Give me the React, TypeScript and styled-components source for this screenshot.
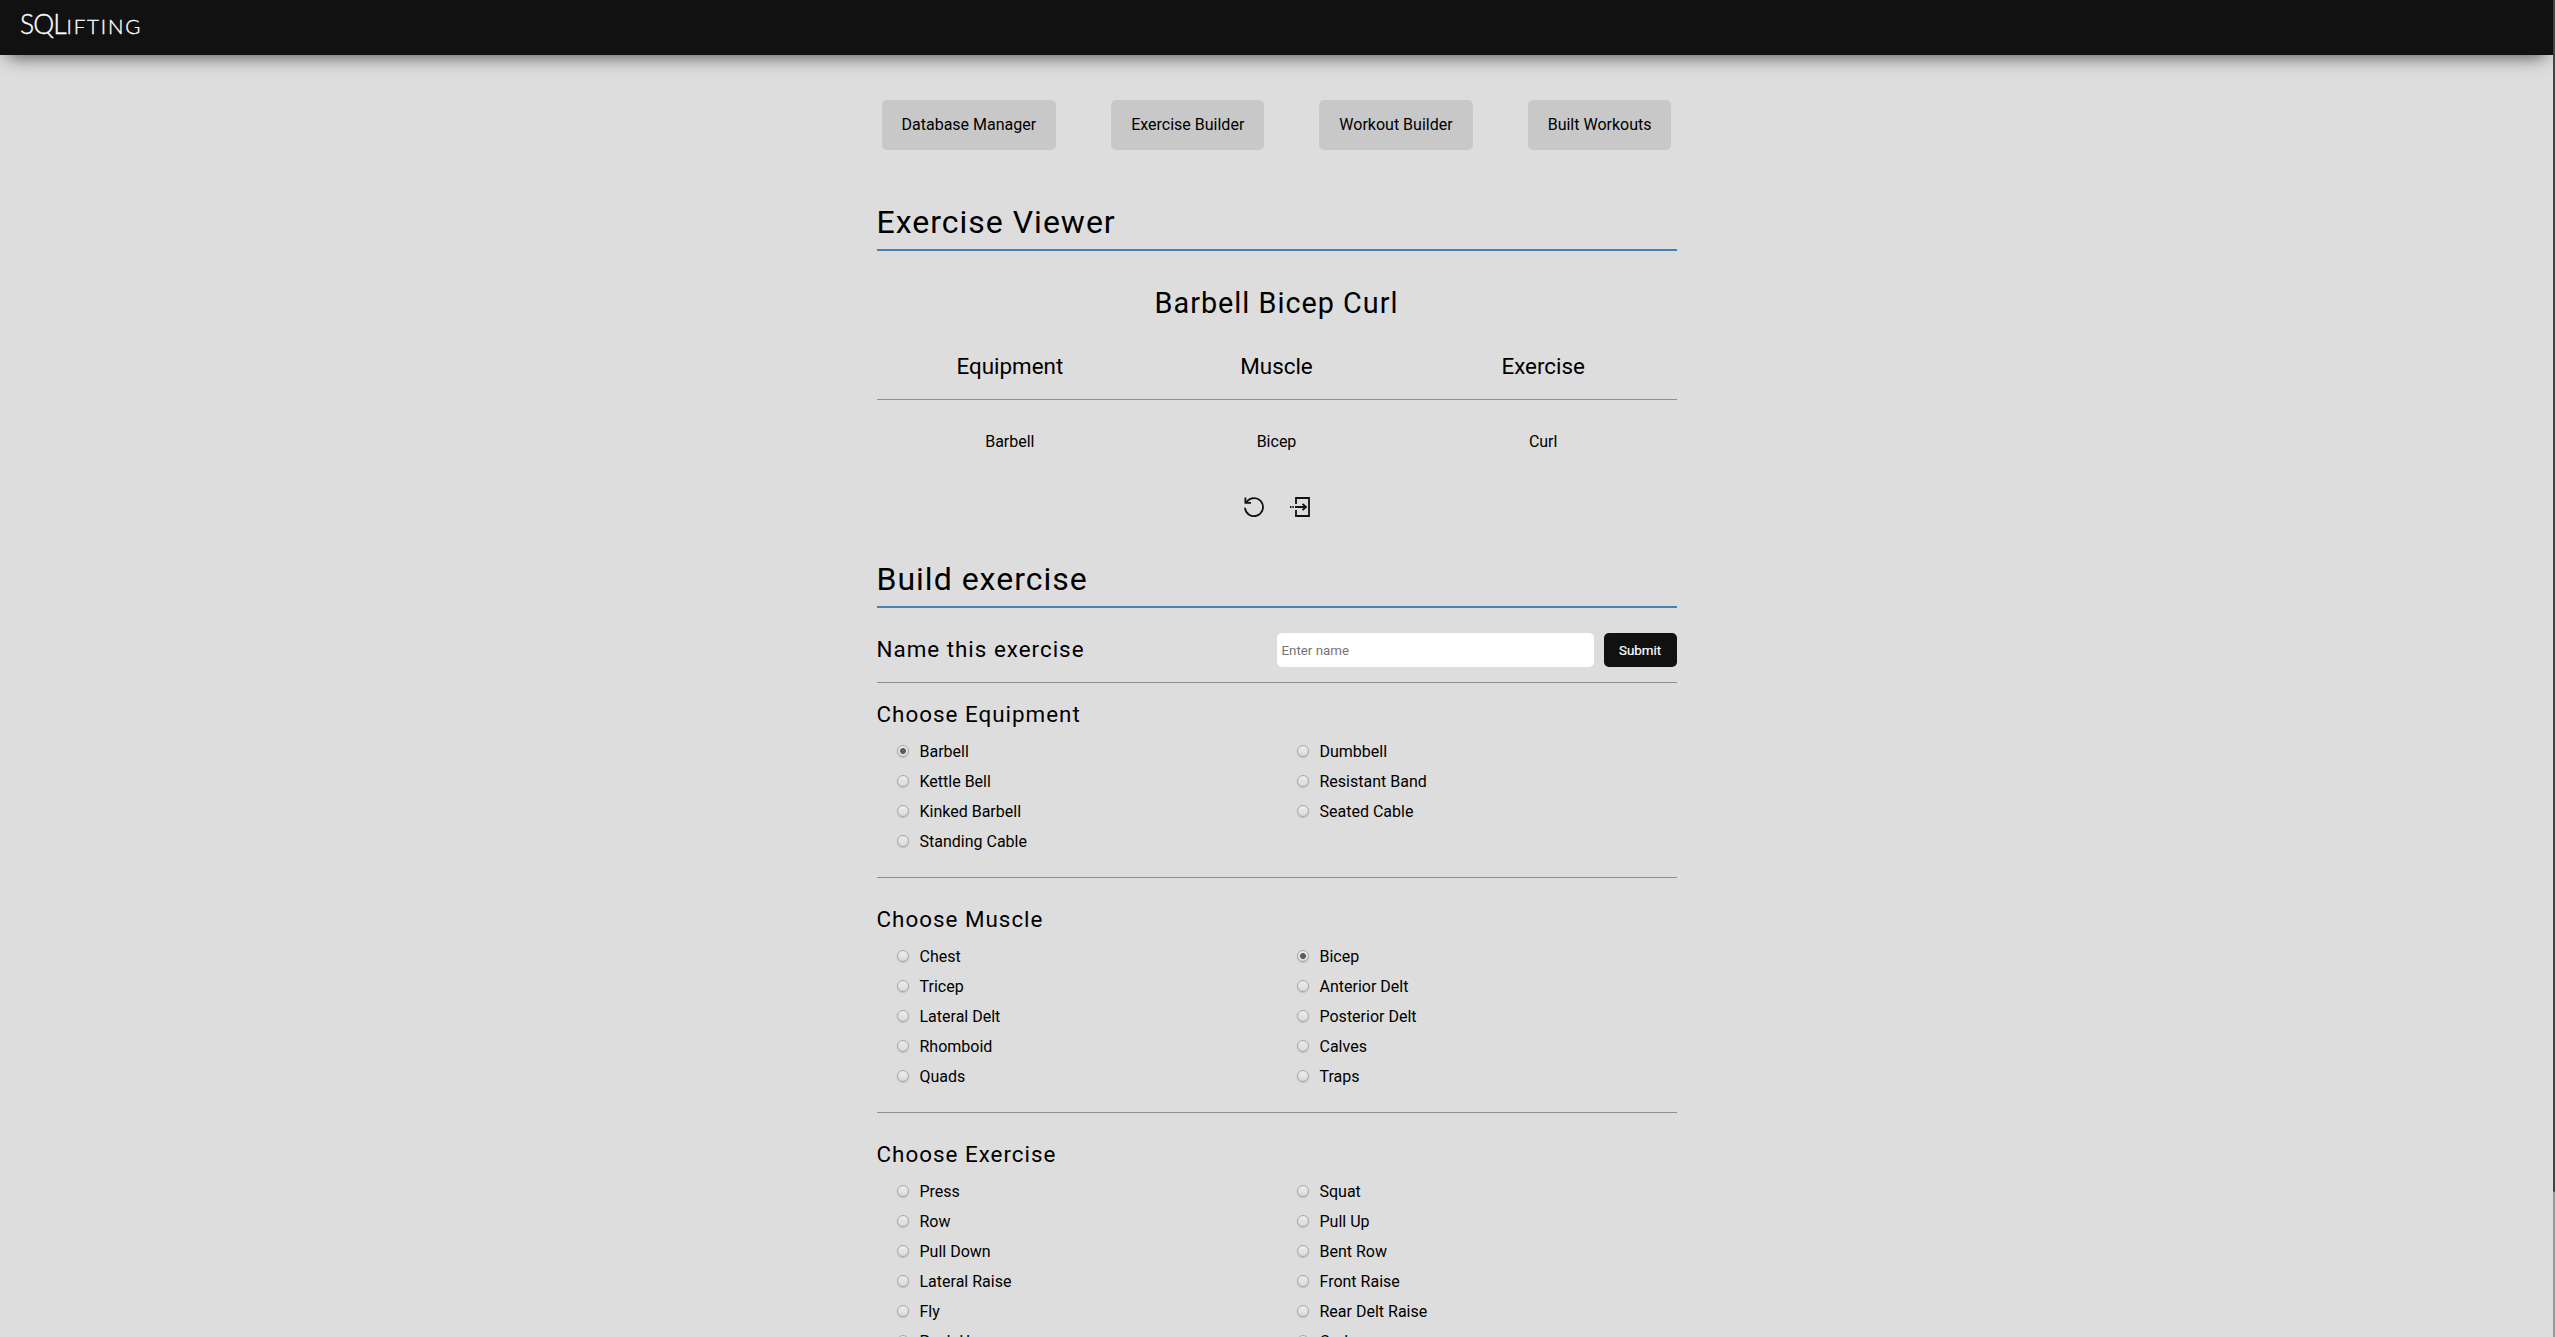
import React from "react";
import styled, { createGlobalStyle } from "styled-components";

const Global = createGlobalStyle`
  * { box-sizing: border-box; }
  html, body { margin: 0; height: 100%; overflow: hidden; }
  body { background: #ddd; color: #000; font: 16px/20px Roboto, "Liberation Sans", sans-serif; }
  h1, h2, h3, p { margin: 0; font-weight: 400; }
`;

const Shell = styled.div`
  display: flex;
  height: 1337px;
`;

const Page = styled.div`
  flex: 1;
  height: 100%;
  overflow: hidden;
`;

const ScrollTrack = styled.div`
  width: 2px;
  background: #999;
`;

const ScrollThumb = styled.div`
  height: 1192px;
  background: #444;
  border-radius: 0 0 1px 1px;
`;

const Header = styled.header`
  height: 55px;
  padding: 0 20px;
  display: flex;
  align-items: center;
  background: #111;
  box-shadow: 0 9px 18px -8px rgba(17, 17, 17, 0.75);
`;

const Logo = styled.div`
  display: flex;
  align-items: baseline;
  padding-bottom: 5px;
  color: #fff;
  font: 300 26.5px/30px Lato, sans-serif;
  letter-spacing: -1px;
  -webkit-text-stroke: 0.35px #fff;
`;

const SmallCaps = styled.span`
  font-size: 20.5px;
  letter-spacing: 1.8px;
  margin-left: 1px;
`;

const Main = styled.main`
  width: 800px;
  margin: 0 auto;
`;

const Nav = styled.nav`
  display: flex;
  justify-content: space-between;
  padding: 45px 5px 49px;
`;

const NavButton = styled.a`
  padding: 15px 20px;
  border-radius: 5px;
  background: #c8c8c8;
  line-height: 20px;
`;

const Title = styled.h1<{ $top?: number }>`
  margin-top: ${(p) => p.$top ?? 0}px;
  height: 52px;
  border-bottom: 2px solid steelblue;
  font-size: 32px;
  line-height: 46px;
  letter-spacing: 1px;
`;

const Name = styled.h2`
  margin-top: 34px;
  font-size: 28.8px;
  line-height: 36px;
  letter-spacing: 1px;
  text-align: center;
`;

const Columns = styled.div<{ $head?: boolean }>`
  display: grid;
  grid-template-columns: repeat(3, 1fr);
  text-align: center;
  ${(p) =>
    p.$head
      ? "margin-top: 30px; height: 49px; font-size: 22.4px; line-height: 31px; border-bottom: 1px solid #919191;"
      : "padding: 31px 0 44px; line-height: 22px;"}
`;

const Actions = styled.div`
  display: flex;
  justify-content: center;
  gap: 26px;
  height: 20px;
`;

const Icon = styled.svg`
  display: block;
  width: 20px;
  height: 20px;
  overflow: visible;
  fill: none;
  stroke: #111;
  stroke-width: 1.8;
`;

const NameRow = styled.div`
  display: flex;
  align-items: center;
  height: 75px;
  padding-top: 10px;
  border-bottom: 1px solid #919191;
`;

const SubTitle = styled.h3`
  flex: 1;
  font-size: 22.4px;
  line-height: 30px;
  letter-spacing: 1px;
`;

const NameLabel = styled(SubTitle)`
  padding-bottom: 2px;
`;

const Field = styled.input`
  width: 317px;
  height: 34px;
  padding: 0 5px;
  border: 0;
  border-radius: 5px;
  background: #fff;
  font: 13.333px Roboto, sans-serif;
  &::placeholder { color: #757575; }
`;

const Submit = styled.button`
  width: 73px;
  height: 34px;
  margin-left: 10px;
  padding: 0;
  border: 0;
  border-radius: 5px;
  background: #111;
  color: #fff;
  font: 400 13.333px Roboto, sans-serif;
  -webkit-text-stroke: 0.2px #fff;
`;

const Group = styled.section<{ $first?: boolean; $h: number }>`
  height: ${(p) => p.$h}px;
  padding-top: ${(p) => (p.$first ? 16 : 26)}px;
  border-bottom: 1px solid #919191;
`;

const Options = styled.div`
  display: grid;
  grid-template-columns: 1fr 1fr;
  grid-auto-rows: 30px;
  column-gap: 20px;
  padding: 8px 0 0 20px;
`;

const Option = styled.label`
  display: flex;
  align-items: center;
  gap: 11px;
`;

const Radio = styled.span<{ $on?: boolean }>`
  width: 12px;
  height: 12px;
  margin-bottom: 2px;
  border-radius: 50%;
  border: 1px solid #a6a6a6;
  box-shadow: 0 1px 1px rgba(0, 0, 0, 0.14);
  background: ${(p) =>
    p.$on
      ? "radial-gradient(circle, #5c5c5c 0 2.6px, transparent 3.3px), linear-gradient(#eee, #dcdcdc)"
      : "linear-gradient(#ededed, #dadada)"};
`;

const groups = [
  { title: "Choose Equipment", on: "Barbell", h: 195, items: ["Barbell", "Dumbbell", "Kettle Bell", "Resistant Band", "Kinked Barbell", "Seated Cable", "Standing Cable"] },
  { title: "Choose Muscle", on: "Bicep", h: 235, items: ["Chest", "Bicep", "Tricep", "Anterior Delt", "Lateral Delt", "Posterior Delt", "Rhomboid", "Calves", "Quads", "Traps"] },
  { title: "Choose Exercise", on: "", h: 300, items: ["Press", "Squat", "Row", "Pull Up", "Pull Down", "Bent Row", "Lateral Raise", "Front Raise", "Fly", "Rear Delt Raise", "Push Up", "Curl"] },
];

export default function App() {
  return (
    <Shell>
      <Global />
      <Page>
        <Header>
          <Logo>SQL<SmallCaps>IFTING</SmallCaps></Logo>
        </Header>
        <Main>
          <Nav>
            {["Database Manager", "Exercise Builder", "Workout Builder", "Built Workouts"].map((t) => (
              <NavButton key={t}>{t}</NavButton>
            ))}
          </Nav>
          <Title>Exercise Viewer</Title>
          <Name>Barbell Bicep Curl</Name>
          <Columns $head><span>Equipment</span><span>Muscle</span><span>Exercise</span></Columns>
          <Columns><span>Barbell</span><span>Bicep</span><span>Curl</span></Columns>
          <Actions>
            <Icon viewBox="0 0 20 20">
              <path d="M1 10.8A9 9 0 1 0 3.2 4.2L2 5.4" />
              <path d="M1.4 .5V5.8H7" />
            </Icon>
            <Icon viewBox="0 0 20 20">
              <path d="M6 7V1H19V19H6V13" />
              <path d="M5 10H16M12.5 6.8L16 10L12.5 13.2M0 10H1.4M2.4 10H3.8" />
            </Icon>
          </Actions>
          <Title $top={39}>Build exercise</Title>
          <NameRow>
            <NameLabel>Name this exercise</NameLabel>
            <Field placeholder="Enter name" />
            <Submit>Submit</Submit>
          </NameRow>
          {groups.map((g, i) => (
            <Group key={g.title} $first={i === 0} $h={g.h}>
              <SubTitle>{g.title}</SubTitle>
              <Options>
                {g.items.map((t) => (
                  <Option key={t}><Radio $on={t === g.on} />{t}</Option>
                ))}
              </Options>
            </Group>
          ))}
        </Main>
      </Page>
      <ScrollTrack><ScrollThumb /></ScrollTrack>
    </Shell>
  );
}
